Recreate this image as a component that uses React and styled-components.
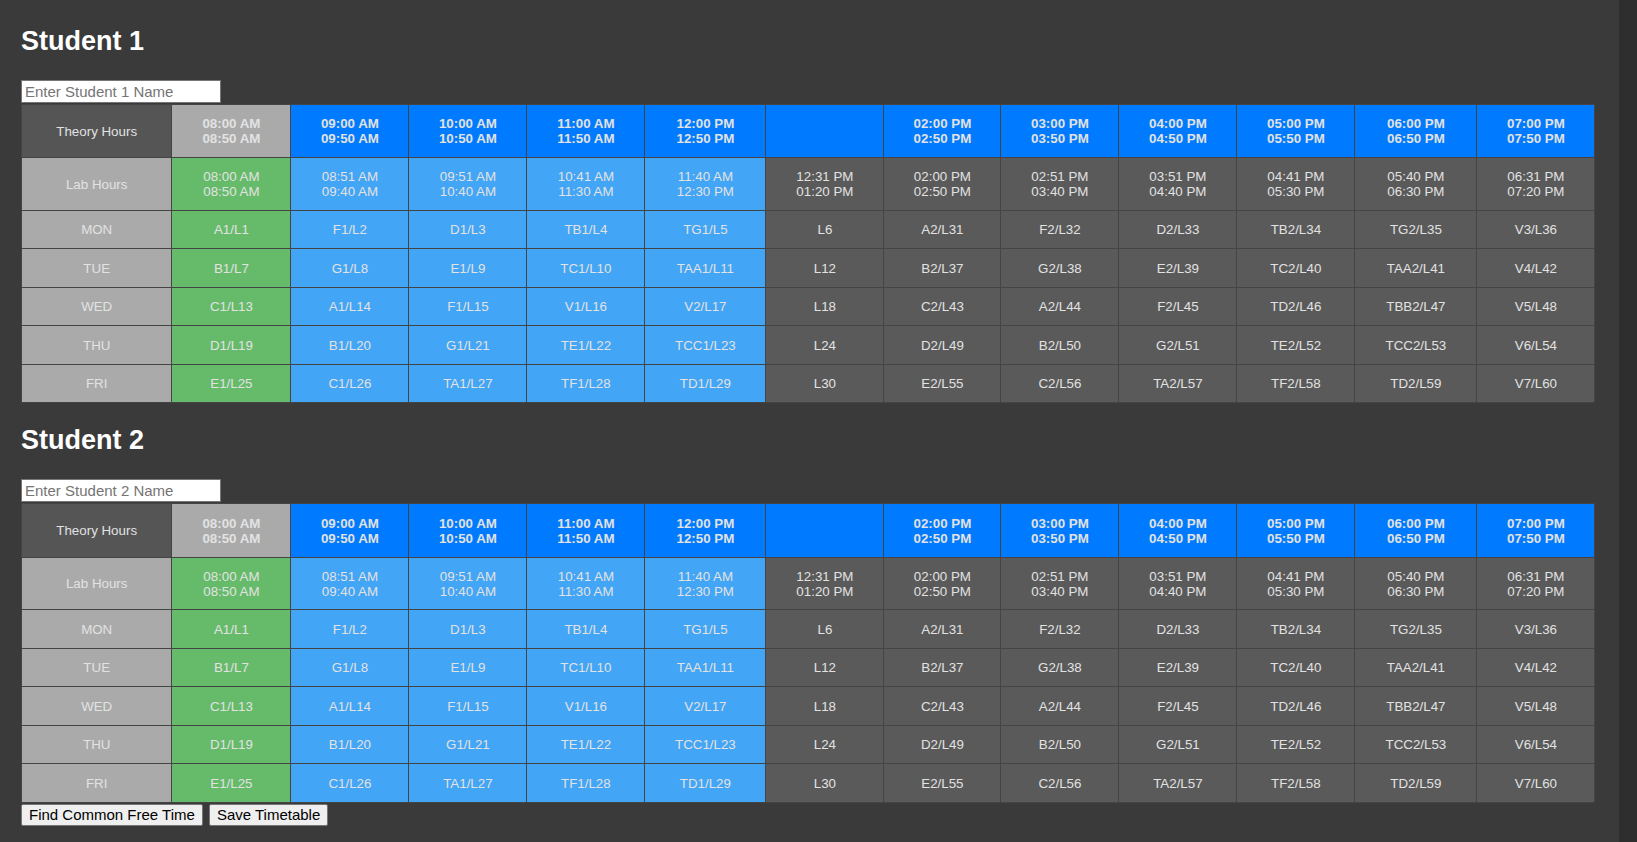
import React from 'react';
import styled, { createGlobalStyle } from 'styled-components';

const GlobalStyle = createGlobalStyle`
  html {
    background: #2e2e2e;
  }
  body {
    margin: 0 18px 0 0;
    background: #3a3a3a;
    min-height: 100vh;
    font-family: "Liberation Sans", Arial, sans-serif;
    color: #e0e0e0;
  }
`;

const Page = styled.div`
  padding: 4px 21px 0 21px;
`;

const Title = styled.h2`
  margin: 22px 0 23px 0;
  font-size: 27px;
  font-weight: bold;
  color: #ffffff;
`;

const NameInput = styled.input`
  display: block;
  box-sizing: border-box;
  width: 200px;
  height: 23px;
  margin-bottom: 1px;
  padding: 1px 3px;
  border: 1px solid #767676;
  background: #ffffff;
  font-family: "Liberation Sans", Arial, sans-serif;
  font-size: 15px;
  color: #222;

  &::placeholder {
    color: #757575;
  }
`;

const Table = styled.table`
  border-collapse: collapse;
  table-layout: fixed;
  width: 1574px;
  font-size: 13.33px;
`;

const Row = styled.tr`
  height: ${props => props.$h}px;
`;

const cellColors = {
  dark: '#555555',
  light: '#aaaaaa',
  blue: '#007bff',
  sky: '#42a5f5',
  green: '#66bb6a',
  gray: '#5a5a5a',
};

const Cell = styled.td`
  padding: 0 4px;
  border: 1px solid #444444;
  background: ${props => cellColors[props.$tone] || '#5a5a5a'};
  color: #e2e2e2;
  text-align: center;
  vertical-align: middle;
  font-weight: ${props => (props.$bold ? 'bold' : 'normal')};
  line-height: 15px;
`;

const Actions = styled.div`
  display: flex;
  gap: 6px;
  margin-top: 1px;
`;

const Button = styled.button`
  height: 22px;
  padding: 0 7px;
  border: 1px solid #767676;
  border-radius: 2px;
  background: #efefef;
  color: #000;
  font-family: "Liberation Sans", Arial, sans-serif;
  font-size: 15px;
  cursor: pointer;
`;

const colWidths = [150.4, 119, 118, 118, 118, 121, 118, 117, 118, 118, 118, 122, 118];

const theory = [
  ['08:00 AM', '08:50 AM'],
  ['09:00 AM', '09:50 AM'],
  ['10:00 AM', '10:50 AM'],
  ['11:00 AM', '11:50 AM'],
  ['12:00 PM', '12:50 PM'],
  null,
  ['02:00 PM', '02:50 PM'],
  ['03:00 PM', '03:50 PM'],
  ['04:00 PM', '04:50 PM'],
  ['05:00 PM', '05:50 PM'],
  ['06:00 PM', '06:50 PM'],
  ['07:00 PM', '07:50 PM'],
];

const lab = [
  ['08:00 AM', '08:50 AM'],
  ['08:51 AM', '09:40 AM'],
  ['09:51 AM', '10:40 AM'],
  ['10:41 AM', '11:30 AM'],
  ['11:40 AM', '12:30 PM'],
  ['12:31 PM', '01:20 PM'],
  ['02:00 PM', '02:50 PM'],
  ['02:51 PM', '03:40 PM'],
  ['03:51 PM', '04:40 PM'],
  ['04:41 PM', '05:30 PM'],
  ['05:40 PM', '06:30 PM'],
  ['06:31 PM', '07:20 PM'],
];

const days = [
  ['MON', ['A1/L1', 'F1/L2', 'D1/L3', 'TB1/L4', 'TG1/L5', 'L6', 'A2/L31', 'F2/L32', 'D2/L33', 'TB2/L34', 'TG2/L35', 'V3/L36']],
  ['TUE', ['B1/L7', 'G1/L8', 'E1/L9', 'TC1/L10', 'TAA1/L11', 'L12', 'B2/L37', 'G2/L38', 'E2/L39', 'TC2/L40', 'TAA2/L41', 'V4/L42']],
  ['WED', ['C1/L13', 'A1/L14', 'F1/L15', 'V1/L16', 'V2/L17', 'L18', 'C2/L43', 'A2/L44', 'F2/L45', 'TD2/L46', 'TBB2/L47', 'V5/L48']],
  ['THU', ['D1/L19', 'B1/L20', 'G1/L21', 'TE1/L22', 'TCC1/L23', 'L24', 'D2/L49', 'B2/L50', 'G2/L51', 'TE2/L52', 'TCC2/L53', 'V6/L54']],
  ['FRI', ['E1/L25', 'C1/L26', 'TA1/L27', 'TF1/L28', 'TD1/L29', 'L30', 'E2/L55', 'C2/L56', 'TA2/L57', 'TF2/L58', 'TD2/L59', 'V7/L60']],
];

// colour of a body cell by column index (0 = first slot)
const slotTone = i => (i === 0 ? 'green' : i <= 4 ? 'sky' : 'gray');

const TwoLines = ({ pair }) =>
  pair ? (
    <>
      {pair[0]}
      <br />
      {pair[1]}
    </>
  ) : null;

const Timetable = () => (
  <Table>
    <colgroup>
      {colWidths.map((w, i) => (
        <col key={i} style={{ width: w }} />
      ))}
    </colgroup>
    <tbody>
      <Row $h={53.2}>
        <Cell $tone="dark">Theory Hours</Cell>
        {theory.map((t, i) => (
          <Cell key={i} $tone={i === 0 ? 'light' : 'blue'} $bold>
            <TwoLines pair={t} />
          </Cell>
        ))}
      </Row>
      <Row $h={52.8}>
        <Cell $tone="light">Lab Hours</Cell>
        {lab.map((t, i) => (
          <Cell key={i} $tone={slotTone(i)}>
            <TwoLines pair={t} />
          </Cell>
        ))}
      </Row>
      {days.map(([day, slots]) => (
        <Row key={day} $h={38.5}>
          <Cell $tone="light">{day}</Cell>
          {slots.map((s, i) => (
            <Cell key={i} $tone={slotTone(i)}>
              {s}
            </Cell>
          ))}
        </Row>
      ))}
    </tbody>
  </Table>
);

const StudentSection = ({ n }) => (
  <section>
    <Title>Student {n}</Title>
    <NameInput type="text" placeholder={`Enter Student ${n} Name`} />
    <Timetable />
  </section>
);

const App = () => (
  <>
    <GlobalStyle />
    <Page>
      <StudentSection n={1} />
      <StudentSection n={2} />
      <Actions>
        <Button>Find Common Free Time</Button>
        <Button>Save Timetable</Button>
      </Actions>
    </Page>
  </>
);

export default App;
